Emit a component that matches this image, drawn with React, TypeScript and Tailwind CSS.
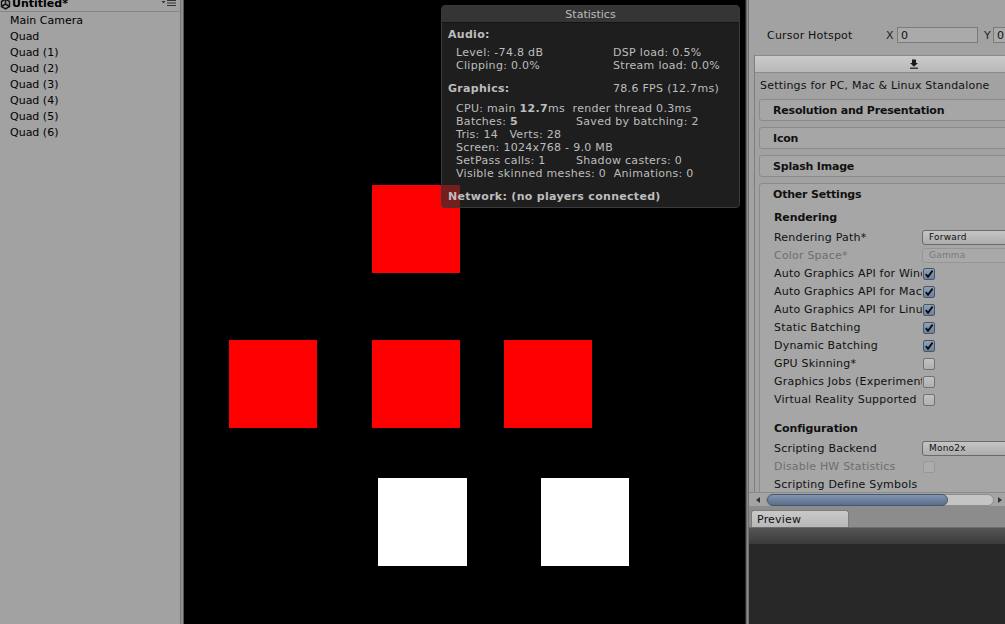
import React from 'react';

const F = "font-['DejaVu_Sans','Liberation_Sans',sans-serif]";

const hierarchyItems = ['Main Camera', 'Quad', 'Quad (1)', 'Quad (2)', 'Quad (3)', 'Quad (4)', 'Quad (5)', 'Quad (6)'];

type Row =
  | { kind: 'head'; text: string }
  | { kind: 'gap'; h: number }
  | { kind: 'popup'; label: string; value: string; disabled?: boolean }
  | { kind: 'check'; label: string; checked: boolean; disabled?: boolean }
  | { kind: 'text'; label: string };

const otherSettings: Row[] = [
  { kind: 'head', text: 'Rendering' },
  { kind: 'gap', h: 3 },
  { kind: 'popup', label: 'Rendering Path*', value: 'Forward' },
  { kind: 'popup', label: 'Color Space*', value: 'Gamma', disabled: true },
  { kind: 'check', label: 'Auto Graphics API for Windows', checked: true },
  { kind: 'check', label: 'Auto Graphics API for Mac', checked: true },
  { kind: 'check', label: 'Auto Graphics API for Linux', checked: true },
  { kind: 'check', label: 'Static Batching', checked: true },
  { kind: 'check', label: 'Dynamic Batching', checked: true },
  { kind: 'check', label: 'GPU Skinning*', checked: false },
  { kind: 'check', label: 'Graphics Jobs (Experimental)', checked: false },
  { kind: 'check', label: 'Virtual Reality Supported', checked: false },
  { kind: 'gap', h: 12 },
  { kind: 'head', text: 'Configuration' },
  { kind: 'gap', h: 3 },
  { kind: 'popup', label: 'Scripting Backend', value: 'Mono2x' },
  { kind: 'check', label: 'Disable HW Statistics', checked: false, disabled: true },
  { kind: 'text', label: 'Scripting Define Symbols' },
];

function UnityGlyph() {
  return (
    <svg width="11" height="12" viewBox="0 0 11 12" className="shrink-0">
      <path d="M1.5 3.5 L5.5 1.2 L9.5 3.5 L9.5 8.5 L5.5 10.8 L1.5 8.5 Z" fill="none" stroke="#151515" strokeWidth="1.5" />
      <path d="M5.5 1.2 V6 M1.5 8.5 L5.5 6 L9.5 8.5" fill="none" stroke="#151515" strokeWidth="1.5" />
    </svg>
  );
}

function MenuGlyph() {
  return (
    <svg width="16" height="8" viewBox="0 0 16 8" className="shrink-0">
      <path d="M0.5 2 H4.5 L2.5 4.5 Z" fill="#333" />
      <rect x="6" y="1" width="9" height="1" fill="#333" />
      <rect x="6" y="3.5" width="9" height="1" fill="#333" />
      <rect x="6" y="6" width="9" height="1" fill="#333" />
    </svg>
  );
}

function Hierarchy() {
  return (
    <div className="flex w-[180px] shrink-0 flex-col bg-[#a2a2a2] text-[11px] text-black">
      <div className="h-[12px] overflow-hidden border-b border-[#868686]">
        <div className="-mt-[5px] flex h-[18px] items-center pr-[3px]">
          <UnityGlyph />
          <span className="ml-[1px] font-bold">Untitled*</span>
          <div className="ml-auto self-start pt-[4px]">
            <MenuGlyph />
          </div>
        </div>
      </div>
      {hierarchyItems.map((name) => (
        <div key={name} className="flex h-[16px] items-center pl-[10px] pt-[2px]">
          {name}
        </div>
      ))}
    </div>
  );
}

function Statistics() {
  const line = 'flex h-[13px] items-center whitespace-pre pt-[2px]';
  return (
    <div className="absolute left-[257px] top-[5px] flex h-[203px] w-[299px] flex-col overflow-hidden rounded-[4px] border border-[#3a3a3a] bg-[rgba(46,46,46,0.66)] text-[11px] tracking-[0.3px] text-[#bdbdbd]">
      <div className="flex h-[17px] shrink-0 items-center justify-center border-b border-[#141414] bg-[rgba(62,62,62,0.7)] pt-[2px] tracking-normal">
        Statistics
      </div>
      <div className={`${line} mt-[5px] pl-[6px] font-bold`}>Audio:</div>
      <div className={`${line} mt-[5px] pl-[14px]`}>
        <span className="w-[157px]">Level: -74.8 dB</span>
        <span>DSP load: 0.5%</span>
      </div>
      <div className={`${line} pl-[14px]`}>
        <span className="w-[157px]">Clipping: 0.0%</span>
        <span>Stream load: 0.0%</span>
      </div>
      <div className={`${line} mt-[10px] pl-[6px]`}>
        <span className="w-[165px] font-bold">Graphics:</span>
        <span>78.6 FPS (12.7ms)</span>
      </div>
      <div className={`${line} mt-[7px] pl-[14px]`}>
        CPU: main <b>12.7</b>ms  render thread 0.3ms
      </div>
      <div className={`${line} pl-[14px]`}>
        <span className="w-[120px]">
          Batches: <b>5</b>
        </span>
        <span>Saved by batching: 2</span>
      </div>
      <div className={`${line} pl-[14px]`}>Tris: 14   Verts: 28</div>
      <div className={`${line} pl-[14px]`}>Screen: 1024x768 - 9.0 MB</div>
      <div className={`${line} pl-[14px]`}>
        <span className="w-[120px]">SetPass calls: 1</span>
        <span>Shadow casters: 0</span>
      </div>
      <div className={`${line} pl-[14px]`}>Visible skinned meshes: 0  Animations: 0</div>
      <div className={`${line} mt-[10px] pl-[6px] font-bold`}>Network: (no players connected)</div>
    </div>
  );
}

function GameView() {
  return (
    <div className="relative w-[561px] shrink-0 overflow-hidden bg-black">
      <div className="absolute left-[188px] top-[185px] h-[88px] w-[88px] bg-[#ff0000]" />
      <div className="absolute left-[45px] top-[340px] h-[88px] w-[88px] bg-[#ff0000]" />
      <div className="absolute left-[188px] top-[340px] h-[88px] w-[88px] bg-[#ff0000]" />
      <div className="absolute left-[320px] top-[340px] h-[88px] w-[88px] bg-[#ff0000]" />
      <div className="absolute left-[194px] top-[478px] h-[88px] w-[89px] bg-white" />
      <div className="absolute left-[357px] top-[478px] h-[88px] w-[88px] bg-white" />
      <Statistics />
    </div>
  );
}

function CheckBox({ checked, disabled }: { checked: boolean; disabled?: boolean }) {
  return (
    <div
      className={`flex h-[12px] w-[12px] items-center justify-center rounded-[2px] border ${
        checked
          ? 'border-[#4a5566] bg-gradient-to-b from-[#8ea2bb] to-[#6c819c]'
          : disabled
            ? 'border-[#979797] bg-[#acacac]'
            : 'border-[#727272] bg-gradient-to-b from-[#c2c2c2] to-[#b0b0b0]'
      }`}
    >
      {checked && (
        <svg width="10" height="10" viewBox="0 0 10 10">
          <path d="M1.8 5.2 L4 7.8 L8.6 1.6" fill="none" stroke="#0b0b0b" strokeWidth="1.8" />
        </svg>
      )}
    </div>
  );
}

function Popup({ value, disabled }: { value: string; disabled?: boolean }) {
  return (
    <div
      className={`flex h-[15px] w-[110px] items-center rounded-[3px] border pl-[6px] pt-[1px] text-[9px] tracking-[0.2px] ${
        disabled
          ? 'border-[#969696] bg-[#a9a9a9] text-[#7a7a7a]'
          : 'border-[#6a6a6a] bg-gradient-to-b from-[#c4c4c4] to-[#adadad] text-[#111]'
      }`}
    >
      {value}
    </div>
  );
}

function SettingRow({ row }: { row: Row }) {
  if (row.kind === 'gap') return <div style={{ height: row.h }} />;
  if (row.kind === 'head')
    return (
      <div className="flex h-[16px] items-center pl-[14px] pt-[2px] font-bold tracking-[-0.1px]">{row.text}</div>
    );
  const dim = 'disabled' in row && row.disabled;
  return (
    <div className="flex h-[18px] items-center pl-[14px]">
      <div
        className={`w-[148px] shrink-0 overflow-hidden whitespace-nowrap pt-[2px] ${dim ? 'text-[#6e6e6e]' : ''}`}
      >
        {row.label}
      </div>
      {row.kind === 'popup' && <Popup value={row.value} disabled={row.disabled} />}
      {row.kind === 'check' && (
        <div className="pl-[1px] pt-[1px]">
          <CheckBox checked={row.checked} disabled={row.disabled} />
        </div>
      )}
    </div>
  );
}

function FoldBox({ title }: { title: string }) {
  return (
    <div className="flex h-[22px] items-center rounded-[3px] border border-[#8a8a8a] bg-[#a6a6a6] pl-[13px] pt-[2px] text-[11px] font-bold tracking-[-0.2px]">
      {title}
    </div>
  );
}

function Inspector() {
  return (
    <div className="flex w-[256px] shrink-0 flex-col bg-[#a2a2a2] text-[11px] tracking-[0.2px] text-[#111]">
      <div className="h-[55px] shrink-0 pt-[27px]">
        <div className="flex h-[16px] items-center pl-[18px] whitespace-nowrap">
          <span className="w-[119px] shrink-0 pt-[2px]">Cursor Hotspot</span>
          <span className="w-[11px] shrink-0 pt-[2px] text-[#222]">X</span>
          <div className="flex h-[16px] w-[81px] shrink-0 items-center border border-[#7b7b7b] bg-[#aaaaaa] pl-[3px] pt-[2px]">0</div>
          <span className="ml-[6px] w-[9px] shrink-0 pt-[2px] text-[#222]">Y</span>
          <div className="flex h-[16px] w-[40px] shrink-0 items-center border border-[#7b7b7b] bg-[#aaaaaa] pl-[3px] pt-[2px]">0</div>
        </div>
      </div>

      <div className="ml-[5px] flex h-[437px] shrink-0 flex-col overflow-hidden border-l border-[#7e7e7e]">
        <div className="flex h-[18px] w-[320px] shrink-0 items-center border-y border-[#8a8a8a] bg-gradient-to-b from-[#cbcbcb] to-[#b8b8b8] pl-[154px]">
          <svg width="10" height="10" viewBox="0 0 10 10">
            <path d="M3 0.5 H7 V4 H9 L5 7.8 L1 4 H3 Z" fill="#1a1a1a" />
            <rect x="1" y="8.6" width="8" height="1.2" fill="#1a1a1a" />
          </svg>
        </div>
        <div className="flex h-[24px] shrink-0 items-center pl-[5px] pt-[3px] whitespace-nowrap">
          Settings for PC, Mac &amp; Linux Standalone
        </div>
        <div className="ml-[4px] mt-[2px] flex w-[320px] shrink-0 flex-col gap-[6px]">
          <FoldBox title="Resolution and Presentation" />
          <FoldBox title="Icon" />
          <FoldBox title="Splash Image" />
          <div className="flex h-[320px] flex-col rounded-[3px] border border-[#8a8a8a] bg-[#a6a6a6]">
            <div className="flex h-[21px] shrink-0 items-center pl-[13px] pt-[2px] font-bold tracking-[-0.2px]">
              Other Settings
            </div>
            <div className="pt-[4px]">
              {otherSettings.map((row, i) => (
                <SettingRow key={i} row={row} />
              ))}
            </div>
          </div>
        </div>
      </div>

      <div className="flex h-[14px] shrink-0 items-center border-t border-[#8a8a8a] bg-[#a4a4a4] pl-[5px]">
        <svg width="8" height="8" viewBox="0 0 8 8" className="shrink-0">
          <path d="M2 4 L6 1 V7 Z" fill="#333" />
        </svg>
        <div className="ml-[4px] flex h-[12px] flex-1 items-center rounded-full border border-[#8e8e8e] bg-[#c4c4c4]">
          <div className="h-[12px] w-[181px] rounded-full border border-[#48566a] bg-gradient-to-b from-[#8297b3] via-[#6b819e] to-[#5a6f8b]" />
        </div>
        <svg width="8" height="8" viewBox="0 0 8 8" className="mr-[1px] ml-[2px] shrink-0">
          <path d="M6 4 L2 1 V7 Z" fill="#333" />
        </svg>
      </div>

      <div className="flex h-[22px] shrink-0 items-end border-b border-[#6c6c6c] bg-[#8c8c8c] pl-[2px]">
        <div className="flex h-[17px] w-[98px] items-center rounded-t-[3px] border border-b-0 border-[#7c7c7c] bg-gradient-to-b from-[#c9c9c9] to-[#b8b8b8] pl-[5px] pt-[2px] text-[#111]">
          Preview
        </div>
      </div>
      <div className="h-[16px] shrink-0 bg-gradient-to-b from-[#555555] to-[#3b3b3b]" />
      <div className="flex-1 bg-[#282828]" />
    </div>
  );
}

export default function App() {
  return (
    <div className={`flex h-[624px] w-[1005px] overflow-hidden bg-black ${F}`}>
      <Hierarchy />
      <div className="flex w-[4px] shrink-0">
        <div className="w-[1px] bg-[#777777]" />
        <div className="w-[2px] bg-[#8f8f8f]" />
        <div className="w-[1px] bg-[#555555]" />
      </div>
      <GameView />
      <div className="flex w-[4px] shrink-0">
        <div className="w-[1px] bg-[#2a2a2a]" />
        <div className="w-[1px] bg-[#666666]" />
        <div className="w-[1px] bg-[#8c8c8c]" />
        <div className="w-[1px] bg-[#707070]" />
      </div>
      <Inspector />
    </div>
  );
}
